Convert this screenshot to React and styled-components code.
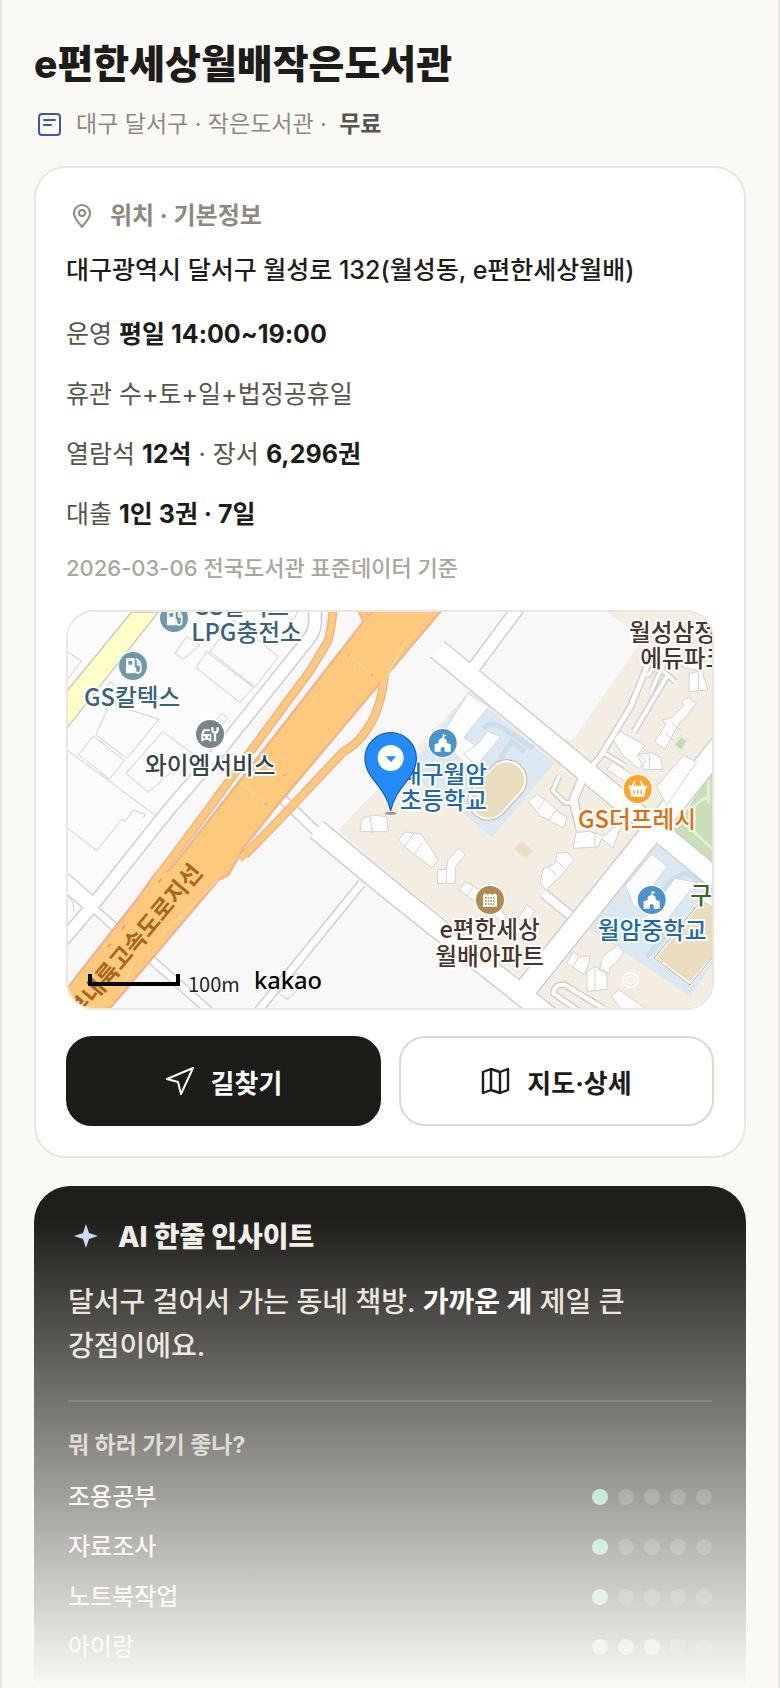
import React from "react";
import styled, { createGlobalStyle } from "styled-components";

const GlobalStyle = createGlobalStyle`
  *, *::before, *::after { box-sizing: border-box; }
  body {
    margin: 0;
    background: #faf9f5;
    color: #1d1c18;
    font-family: Inter, "Noto Sans CJK KR", sans-serif;
    font-size: 24px;
    word-break: keep-all;
  }
  h1, h2, h3, p, ul { margin: 0; padding: 0; }
  ul { list-style: none; }
`;

const Page = styled.main`
  position: relative;
  padding: 34px 32px 0;
  border: solid #e9e7df;
  border-width: 0 2px;
  background: #faf9f5;
  overflow: hidden;
`;

const Title = styled.h1`
  font-size: 39px;
  line-height: 60px;
  font-weight: 800;
`;

const Meta = styled.p`
  display: flex;
  align-items: center;
  gap: 14px;
  margin: 10px 0 22px;
  font-size: 23px;
  line-height: 40px;
  color: #8d897e;
  svg { margin-left: 2px; }
  strong { color: #57544b; font-weight: 700; margin-left: 6px; }
`;

const Card = styled.section`
  padding: 28px 30px 30px;
  border: 2px solid #e9e7df;
  border-radius: 32px;
  background: #fff;
`;

const CardHeading = styled.h2`
  display: flex;
  align-items: center;
  gap: 14px;
  padding-left: 2px;
  color: #8d897e;
  font-size: 24px;
  line-height: 40px;
  font-weight: 700;
`;

const Address = styled.p`
  margin-top: 14px;
  font-size: 25px;
  line-height: 40px;
  font-weight: 500;
`;

const Facts = styled.ul`
  margin-top: 14px;
`;

const Fact = styled.li`
  font-size: 25px;
  line-height: 60px;
  color: #57544b;
  strong { color: #1d1c18; font-weight: 700; }
`;

const Source = styled.p`
  margin: 6px 0 24px;
  font-size: 22px;
  line-height: 36px;
  font-weight: 500;
  color: #aaa69a;
`;

const MapFrame = styled.div`
  border: 2px solid #e9e7df;
  border-radius: 28px;
  overflow: hidden;
  svg { display: block; width: 100%; height: auto; }
`;

const Actions = styled.div`
  display: grid;
  grid-template-columns: 1fr 1fr;
  gap: 18px;
  margin-top: 26px;
`;

const ActionButton = styled.button`
  display: flex;
  align-items: center;
  justify-content: center;
  gap: 16px;
  height: 90px;
  border: 2px solid ${(p) => (p.$primary ? "#1d1c18" : "#dcdad0")};
  border-radius: 26px;
  background: ${(p) => (p.$primary ? "#1d1c18" : "#fff")};
  color: ${(p) => (p.$primary ? "#fff" : "#1d1c18")};
  font: inherit;
  font-size: 26px;
  font-weight: 700;
  cursor: pointer;
`;

const Insight = styled.section`
  margin-top: 28px;
  padding: 30px 34px 16px;
  border-radius: 36px 36px 0 0;
  background: #1f1e1a;
  color: #f1efe8;
`;

const InsightHeading = styled.h2`
  display: flex;
  align-items: center;
  gap: 18px;
  padding-left: 4px;
  font-size: 28px;
  line-height: 42px;
  font-weight: 800;
`;

const Summary = styled.p`
  margin-top: 22px;
  padding-bottom: 32px;
  border-bottom: 2px solid #3a3934;
  font-size: 28px;
  line-height: 44px;
  font-weight: 500;
  color: #e6e2d6;
  strong { color: #fff; font-weight: 700; }
`;

const SubHeading = styled.h3`
  margin: 24px 0 8px;
  font-size: 23px;
  line-height: 38px;
  font-weight: 700;
  color: #c4c0b4;
`;

const ScoreRow = styled.li`
  display: flex;
  align-items: center;
  justify-content: space-between;
  line-height: 50px;
  font-weight: 500;
`;

const Dots = styled.span`
  display: flex;
  gap: 10px;
`;

const Dot = styled.i`
  width: 16px;
  height: 16px;
  border-radius: 50%;
  background: ${(p) => (p.$on ? "#7fd6ae" : "#474640")};
`;

const Fade = styled.div`
  position: absolute;
  inset: auto -2px 0;
  height: 470px;
  background: linear-gradient(rgba(250, 249, 245, 0), #faf9f5);
  pointer-events: none;
`;

const MapLabel = styled.text`
  font-family: "Noto Sans CJK KR", sans-serif;
  font-size: 71px;
  font-weight: 500;
  fill: ${(p) => p.$color};
  stroke: #fff;
  stroke-width: 12px;
  stroke-linejoin: round;
  paint-order: stroke;
`;

const Roads = ({ roads }) => (
  <g fill="none" strokeLinejoin="round">
    {roads.map(([d, w]) => <path key={d} d={d} stroke="#d0d0d0" strokeWidth={w + 9} />)}
    {roads.map(([d, w]) => <path key={d + "i"} d={d} stroke="#fff" strokeWidth={w} />)}
  </g>
);

const Badge = ({ x, y, color, children }) => (
  <g transform={`translate(${x} ${y})`}>
    <circle r="46" fill="#fff" />
    <circle r="42" fill={color} />
    <g fill="#fff">{children}</g>
  </g>
);

const FuelGlyph = () => (
  <>
    <path fillRule="evenodd" d="M-21-20q0-3 3-3H2q3 0 3 3v42h-26zM-14-15V-4H-2v-11z" />
    <path d="M8-22q15 8 15 18v17q0 8-8 8T7 13V4M14-16v12h7" fill="none" stroke="#fff" strokeWidth="5" />
  </>
);

const SchoolGlyph = () => (
  <path d="M-24 26V4l12-4v-9L0-17v-10l12 4-9 5v2l9 7v9l12 4v22H6V16q-6-8-12 0v10z" />
);

const TownMap = () => (
  <svg viewBox="24 36 1932 1188" role="img" aria-label="지도">
    <path fill="#f8f8f8" d="M21 36h1938v1188H21z" />
    <path fill="#fcfcfc" d="M21 36H740L700 180 420 500 21 960z" />
    <path fill="#f3ede2" d="M835 690 1235 270 1535 425 1750 115 1640 36H1960V1230H1430L1380 1130 980 820z" />
    <path fill="#fffec8" stroke="#c8c8bc" strokeWidth="4" d="M10 286 215 36h80L10 398z" />

    <g fill="none" stroke="#cecece" strokeWidth="3">
      <path d="M450 155 520 60 655 170 585 262zM440 155 580 262 540 308 408 203zM345 160 380 110 420 135 370 178z" />
      <path d="M150 310 297 358 200 476 108 404zM100 408 193 482 148 537 56 464zM308 395 397 460 265 577 198 520zM21 155 65 183 21 240M470 360l15-20 18 15-20 25M130 270l20-24 30 22M21 450l300 222" />
      <path d="M21 683 110 752 185 658l12 5 23-33 37 13-7 10M680 50l20 12 12-26M21 890q22 8 20 45" />
      <path d="M655 1180 710 1118 740 1142 683 1199z" />
    </g>

    <path fill="#dbe8f1" d="M1225 275 1065 480 1080 545 1210 640 1295 712 1485 490z" />
    <path d="M1270 385q25-25 60 0l90 60M1395 455l-40-30-45 70" fill="none" stroke="#cbdeeb" strokeWidth="16" />
    <g fill="#fcfdff" stroke="#d3d7dc" strokeWidth="3">
      <path d="M1225 280 1287 320 1212 412 1270 455 1230 500 1135 420z" />
      <path d="M1256 430 1283 394 1322 410 1250 496 1210 462z" />
    </g>
    <g fill="none" strokeLinecap="round">
      <path d="M1340 540 1285 600" stroke="#c9b49c" strokeWidth="124" />
      <path d="M1340 540 1285 600" stroke="#fff" strokeWidth="118" />
      <path d="M1340 540 1285 600" stroke="#eaddbf" strokeWidth="106" />
    </g>

    <path fill="#dbe8f1" d="M1785 730 1960 870V1090L1890 1187 1585 985z" />
    <path d="M1800 890q30-60 80-70l80 45M1760 1070l60-70" fill="none" stroke="#cbdeeb" strokeWidth="16" />
    <path fill="#fbfcfe" stroke="#d6d9dd" strokeWidth="3" d="M1776 762l46 38-98 126-27-70zM1845 835l65 12-135 170-40-35z" />
    <path fill="#eaddbf" stroke="#fff" strokeWidth="9" d="M1784 1074 1930 895 1985 930V1040L1890 1152z" />
    <path fill="none" stroke="#bda58d" strokeWidth="3" d="M1782 1074 1925 900M1782 1074 1890 1155 1960 1068" />

    <path fill="#c8dfb8" d="M1960 510V790L1840 690z" />
    <path fill="none" stroke="#e1eed7" strokeWidth="9" d="M1890 640q20-40 60-50M1880 675l80 75M1945 540v70" />
    <path fill="#bfdcae" stroke="#e4eddc" strokeWidth="7" d="M1842 436l20-28 22 14-20 30z" />
    <path fill="#e8dfba" stroke="#efe2d0" strokeWidth="5" d="M1365 748l20-22 32 26-18 22z" />

    <Roads roads={[
      ["M1132 148 1985 850", 58],
      ["M1385 10 1240 205", 34],
      ["M1990 425 1760 715 1395 1170", 62],
      ["M770 688 980 862 1480 1260", 58],
      ["M665 595 775 700", 24],
      ["M905 850 590 1238", 20],
      ["M765 20V70Q765 95 742 122L480 450 330 625 95 920 10 1020", 34],
      ["M10 840 95 915", 44],
      ["M95 920 450 1235", 20],
      ["M1775 165 1712 320 1620 470 1595 500", 14],
      ["M1625 455 1695 497", 10],
      ["M1812 150V190L1775 270M1760 230 1790 195 1845 245", 10],
      ["M1820 230 1722 395", 12],
      ["M1565 540 1540 600 1562 690", 22],
      ["M1540 608H1515L1478 572 1498 528", 10],
      ["M1450 880 1530 945", 24],
      ["M1630 1225 1515 1155Q1485 1150 1480 1180L1560 1235", 12],
    ]} />

    <g fill="#fdfdfd" stroke="#d5d2cd" strokeWidth="3">
      <path d="M1865 305l20-13 24 18-32 42-20 18-42 78-32-22 35-54-12-12 30-8 35-35zM1660 420l20-26 75 42-20 27 22 18-20 25-48-40zM1732 465l42-8 30 18 3 34-54-1zM1640 508l20-22 105 70-18 25zM1790 560l80-94 40 20-90 130zM1888 220l38-8 18 58-58 5zM1860 200l50-10 20 25z" />
      <path d="M1405 605l25-22 30 18 30 30 32 20-12 34-35-20-35-18zM1540 745l8-48 40-3 45 14 60-55-34 90-34-28-10 26zM1440 848l10-42 35-15 5-32 34-1 18 22-38 48-35 30-8 15zM1015 720l22-24 45 5 25 35 28 45-20 22-38-30-30-22zM1133 850v-42h26l5-30 34-34 18 20-30 36v50zM1198 870l18-26 42 25 50 35 30 48-10 15-80-60zM1375 955l25-42 25 20-25 40z" />
      <path d="M1520 1090l20-36 20 18 30-6-4 26-12 32zM1628 1068l45-32 18 20-20 30-20 15-5 20-28-10zM1580 1115l25-15 35 15 2 53-60 6zM1655 1190l20-22 90 62h-80z" />
      <path d="M900 695l5-38 30-12 45 5 5 45zM930 648l8 50" />
      <path fill="none" d="M1835 370l26 20M1815 400l24 20M1915 215v55M1768 462v46M1455 598l-20 30M1488 630l-22 32M1605 698v48M1465 800l24 26M1490 782l30 30M1063 698l-28 40M1087 728l-22 32M1159 808v42M1240 860l-20 28M1605 1100v72M1555 1072l-16 28" />
    </g>
    <circle cx="1711" cy="1140" r="22" fill="none" stroke="#fff" strokeWidth="6" />
    <circle cx="1711" cy="1140" r="11" fill="none" stroke="#fff" strokeWidth="4" />

    <g fill="none" strokeLinejoin="round">
      <path d="M820 20Q812 110 800 130T752 210L560 470 445 628 294 830M975 200Q970 300 935 365T850 455L690 625 555 765M895 10l30 60" stroke="#f2b28c" strokeWidth="27" />
      <path fill="#fdc97c" stroke="#f2b28c" strokeWidth="7" d="M925 46 960 10H1165L1140 36 985 220 642 628 550 745 505 825 475 840 150 1225 10 1240V1180L237 890 285 822 330 810 475 625z" />
      <path d="M820 20Q812 110 800 130T752 210L560 470 445 628 294 830M975 200Q970 300 935 365T850 455L690 625 540 780M895 10l30 60" stroke="#fdc97c" strokeWidth="18" />
      <path d="M865 167 936 224M540 550 618 612M475 840 300 1010M220 1090 180 1180M970 250 1040 120" stroke="#ffe4b8" strokeWidth="3" />
      <path d="M296 848l8-12M186 988l8-12M144 1042l8-12M614 612h6M864 167h4M934 224h5M671 526h5" stroke="#ef9c7e" strokeWidth="6" />
    </g>

    <text
      transform="translate(58 1262) rotate(-50)"
      fontFamily='"Noto Sans CJK KR", sans-serif'
      fontSize="70"
      fontWeight="700"
      fill="#a9651c"
    >부내륙고속도로지선</text>

    <Badge x={342} y={54} color="#6f99ad"><FuelGlyph /></Badge>
    <MapLabel x="398" y="44" $color="#34647c">GS칼텍스</MapLabel>
    <MapLabel x="394" y="123" $color="#34647c">LPG충전소</MapLabel>
    <Badge x={219} y={198} color="#6f99ad"><FuelGlyph /></Badge>
    <MapLabel x="72" y="317" $color="#34647c">GS칼텍스</MapLabel>
    <Badge x={450} y={402} color="#77868d">
      <path fillRule="evenodd" d="M-26 22V0l6-14H0v6h-16l-3 8H4v22h-7v-5h-16v5zM-21 7v5h6V7zM-6 7v5h6V7z" />
      <path d="M15 22V-2M7-20v6q0 10 8 10t8-10v-6" fill="none" stroke="#fff" strokeWidth="7" />
    </Badge>
    <MapLabel x="255" y="521" $color="#36444b">와이엠서비스</MapLabel>

    <Badge x={1148} y={429} color="#4c93cd"><SchoolGlyph /></Badge>
    <MapLabel x="1020" y="549" $color="#1c68b2">대구월암</MapLabel>
    <MapLabel x="1020" y="627" $color="#1c68b2">초등학교</MapLabel>

    <Badge x={1733} y={567} color="#ffa42e">
      <path fillRule="evenodd" d="M-27-10h54v9h-3L19 23h-38L-24-1h-3zM-13 2v14h4V2zM-2 2v14h4V2zM9 2v14h4V2z" />
      <path d="M-16-8l8-17M16-8 8-25" stroke="#fff" strokeWidth="5" />
    </Badge>
    <MapLabel x="1554" y="684" $color="#e16d09">GS더프레시</MapLabel>
    <MapLabel x="1707" y="122" $color="#4a3428">월성삼정</MapLabel>
    <MapLabel x="1741" y="201" $color="#4a3428">에듀파크</MapLabel>

    <Badge x={1290} y={900} color="#b08a55">
      <path d="M-21 20v-34l6-6 9 5 6-5 6 5 9-5 6 6v34z" />
      <path d="M-15-6h30M-15 3h30M-15 12h30" stroke="#b08a55" strokeWidth="5" strokeDasharray="5 3" />
    </Badge>
    <MapLabel x="1289" y="1013" textAnchor="middle" $color="#4a3428">e편한세상</MapLabel>
    <MapLabel x="1289" y="1094" textAnchor="middle" $color="#4a3428">월배아파트</MapLabel>

    <Badge x={1775} y={900} color="#4c93cd"><SchoolGlyph /></Badge>
    <MapLabel x="1613" y="1016" $color="#1c68b2">월암중학교</MapLabel>
    <MapLabel x="1891" y="911" $color="#37691d">구</MapLabel>

    <ellipse cx="992" cy="640" rx="18" ry="5" fill="#777" opacity=".7" />
    <path fill="#238bfa" stroke="#1262c6" strokeWidth="4" d="M992 398a77 77 0 0 1 77 77c0 60-60 80-77 157-17-77-77-97-77-157a77 77 0 0 1 77-77z" />
    <circle cx="992" cy="474" r="39" fill="#fff" />
    <path fill="#238bfa" d="M977 469h31l-15 17z" />

    <path d="M90 1122v30h264v-30" fill="none" stroke="#000" strokeWidth="12" />
    <text x="384" y="1176" fontFamily='"Noto Sans CJK KR", sans-serif' fontSize="60" fill="#222" stroke="#fff" strokeWidth="4" paintOrder="stroke">100m</text>
    <text x="582" y="1168" fontFamily='"Noto Sans", sans-serif' fontSize="71" fontWeight="500" fill="#000">kakao</text>
  </svg>
);

const stroke = { fill: "none", stroke: "currentColor", strokeLinecap: "round", strokeLinejoin: "round" };

const NoteIcon = () => (
  <svg width="26" height="26" viewBox="0 0 26 26" {...stroke} stroke="#3f57a7" strokeWidth="2" aria-hidden="true">
    <rect x="3" y="3" width="21" height="21" rx="3" />
    <path d="M8 9h11M8 14h7" />
  </svg>
);

const PinIcon = () => (
  <svg width="28" height="28" viewBox="0 0 28 28" {...stroke} strokeWidth="2" aria-hidden="true">
    <path d="M14 25C12 21 6 18 6 11a8 8 0 0 1 16 0c0 7-6 10-8 14z" />
    <circle cx="14" cy="11" r="3" />
  </svg>
);

const SendIcon = () => (
  <svg width="30" height="30" viewBox="0 0 30 30" {...stroke} strokeWidth="2" aria-hidden="true">
    <path d="M28 2 16 28l-3-12L2 13z" />
  </svg>
);

const MapIcon = () => (
  <svg width="30" height="30" viewBox="0 0 30 30" {...stroke} strokeWidth="2.4" aria-hidden="true">
    <path d="M2 6l8-3 9 3 8-3v21l-8 3-9-3-8 3zM10 3v21M19 6v21" />
  </svg>
);

const SparkIcon = () => (
  <svg width="28" height="28" viewBox="0 0 28 28" aria-hidden="true">
    <path fill="#cdd8f5" d="M14 1l3 9 9 3-9 3-3 9-3-9-9-3 9-3z" />
  </svg>
);

const scores = [
  ["조용공부", 1],
  ["자료조사", 1],
  ["노트북작업", 1],
  ["아이랑", 3],
];

export default function App() {
  return (
    <>
      <GlobalStyle />
      <Page>
        <Title>e편한세상월배작은도서관</Title>
        <Meta>
          <NoteIcon />
          <span>대구 달서구 · 작은도서관 · <strong>무료</strong></span>
        </Meta>

        <Card>
          <CardHeading><PinIcon />위치 · 기본정보</CardHeading>
          <Address>대구광역시 달서구 월성로 132(월성동, e편한세상월배)</Address>
          <Facts>
            <Fact>운영 <strong>평일 14:00~19:00</strong></Fact>
            <Fact>휴관 수+토+일+법정공휴일</Fact>
            <Fact>열람석 <strong>12석</strong> · 장서 <strong>6,296권</strong></Fact>
            <Fact>대출 <strong>1인 3권 · 7일</strong></Fact>
          </Facts>
          <Source>2026-03-06 전국도서관 표준데이터 기준</Source>
          <MapFrame><TownMap /></MapFrame>
          <Actions>
            <ActionButton type="button" $primary><SendIcon />길찾기</ActionButton>
            <ActionButton type="button"><MapIcon />지도·상세</ActionButton>
          </Actions>
        </Card>

        <Insight>
          <InsightHeading><SparkIcon />AI 한줄 인사이트</InsightHeading>
          <Summary>달서구 걸어서 가는 동네 책방. <strong>가까운 게</strong> 제일 큰 강점이에요.</Summary>
          <SubHeading>뭐 하러 가기 좋나?</SubHeading>
          <ul>
            {scores.map(([label, score]) => (
              <ScoreRow key={label}>
                {label}
                <Dots role="img" aria-label={`5점 중 ${score}점`}>
                  {[1, 2, 3, 4, 5].map((n) => <Dot key={n} $on={n <= score} />)}
                </Dots>
              </ScoreRow>
            ))}
          </ul>
        </Insight>
        <Fade />
      </Page>
    </>
  );
}
